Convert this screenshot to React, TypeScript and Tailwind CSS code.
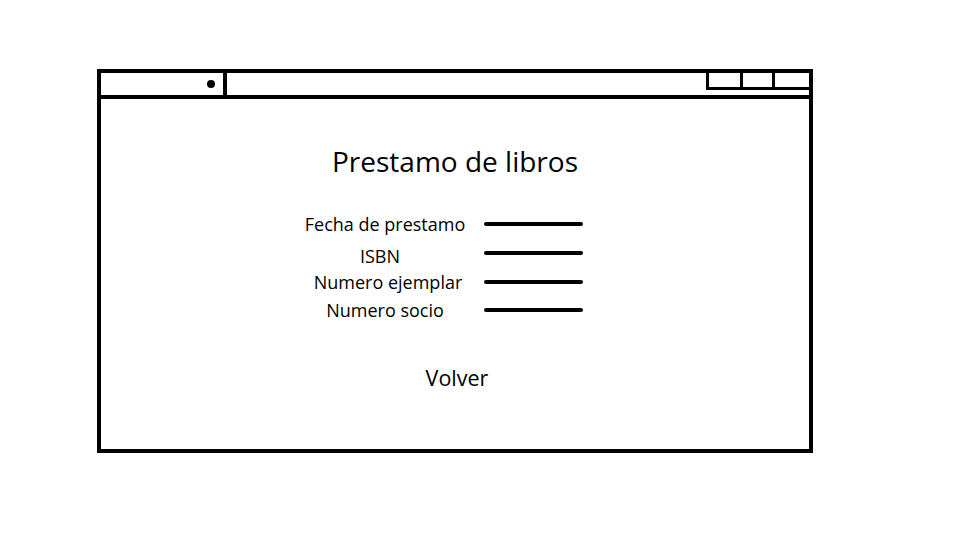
import React from "react";

const font = { fontFamily: '"Open Sans", "Noto Sans", sans-serif' };

function Row({ label, dy = 0, dx = 0 }: { label: string; dy?: number; dx?: number }) {
  return (
    <div className="flex h-[28.67px] items-center">
      <div className="w-[170px] text-center text-[18px] leading-none text-black">
        <span className="relative inline-block" style={{ top: dy, left: dx }}>{label}</span>
      </div>
      <div className="ml-[14px] h-[4px] w-[99px] rounded-full bg-black" />
    </div>
  );
}

export default function App() {
  return (
    <div className="h-[540px] w-[960px] overflow-hidden bg-white" style={font}>
      <div className="ml-[97px] mt-[69px] flex h-[384px] w-[716px] flex-col border-4 border-black">
        {/* title bar */}
        <div className="flex h-[26px] border-b-4 border-black">
          <div className="flex w-[122px] items-center justify-end pr-[8px]">
            <div className="h-[8px] w-[8px] rounded-full bg-black" />
          </div>
          <div className="w-[4px] bg-black" />
          <div className="flex-1" />
          <div className="flex h-[17px] border-b-[3px] border-l-[3px] border-black">
            <div className="w-[31px]" />
            <div className="w-[3px] bg-black" />
            <div className="w-[29px]" />
            <div className="w-[3px] bg-black" />
            <div className="w-[34px]" />
          </div>
        </div>
        {/* content */}
        <div className="flex flex-1 flex-col">
          <div className="mt-[44px] text-center text-[28px] leading-[36px] text-black">Prestamo de libros</div>
          <div className="ml-[199px] mt-[31px] flex flex-col">
            <Row label="Fecha de prestamo" />
            <Row label="ISBN" dy={3} dx={-5} />
            <Row label="Numero ejemplar" dx={3} />
            <Row label="Numero socio" />
          </div>
          <div className="mt-[39px] pl-[4px] text-center text-[21.5px] leading-[28px] text-black">Volver</div>
        </div>
      </div>
    </div>
  );
}
